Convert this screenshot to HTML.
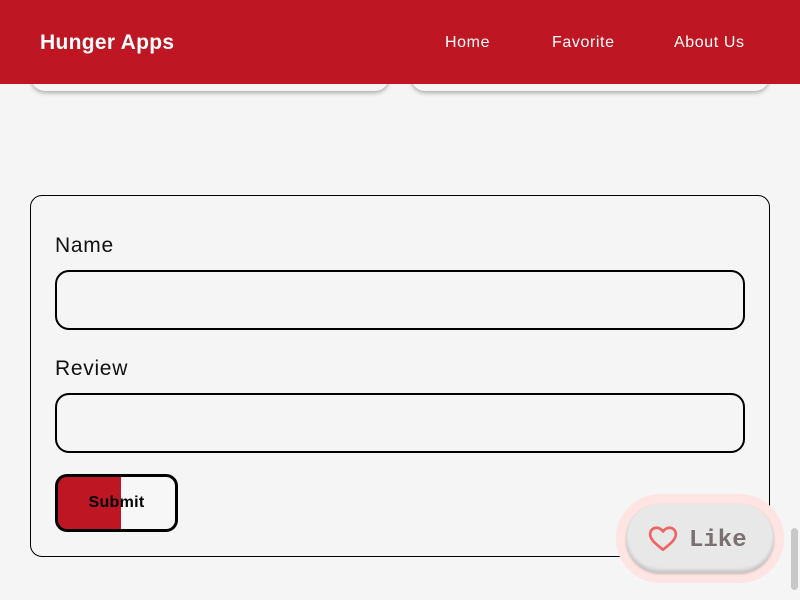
<!DOCTYPE html>
<html><head><meta charset="utf-8"><style>
*{box-sizing:border-box;margin:0;padding:0}
body{width:800px;height:600px;overflow:hidden;background:#f5f5f5;font-family:"Liberation Sans",sans-serif;position:relative}
header{position:absolute;top:0;left:0;width:800px;height:84px;background:#be1622;z-index:2}
.logo{position:absolute;left:40px;top:31px;color:#fff;font-weight:bold;font-size:21px;letter-spacing:0.3px}
nav a{position:absolute;top:34px;color:#fff;font-size:16px;letter-spacing:0.6px;text-decoration:none}
.card{position:absolute;top:60px;height:31px;background:#f5f5f5;border-radius:0 0 14px 14px;box-shadow:0 2px 4px rgba(0,0,0,.3);z-index:1}
form{position:absolute;left:30px;top:195px;width:740px;height:362px;border:1px solid #000;border-radius:12px}
label{position:absolute;left:24px;font-size:21px;letter-spacing:0.7px;color:#111}
.inp{position:absolute;left:24px;width:690px;height:60px;border:2px solid #000;border-radius:14px;background:#f5f5f5}
.btn{position:absolute;left:24px;top:278px;width:123px;height:58px;border:3px solid #000;border-radius:12px;overflow:hidden;background:linear-gradient(90deg,#be1622 0,#be1622 63px,#f7f7f7 63px)}
.btn span{position:absolute;left:0;right:0;top:17px;text-align:center;font-weight:bold;font-size:16px;letter-spacing:0.3px}
.likewrap{position:absolute;left:616px;top:494px;width:168px;height:89px;border-radius:44px;background:#ffe4e4}
.like{position:absolute;left:10px;top:10px;width:148px;height:69px;border-radius:34px;background:#e8e8e8;box-shadow:inset 0 -3px 3px rgba(0,0,0,.15),0 1px 2px rgba(0,0,0,.2)}
.like span{position:absolute;left:63px;top:23px;font-family:"Liberation Mono",monospace;font-weight:bold;font-size:24px;color:#7a7070}
.sb{position:absolute;left:791px;top:528px;width:7px;height:62px;background:#c8c8c8;border-radius:4px}
</style></head><body>
<header><div class="logo">Hunger Apps</div>
<nav><a style="left:445px">Home</a><a style="left:552px">Favorite</a><a style="left:674px">About Us</a></nav></header>
<div class="card" style="left:31px;width:358px"></div>
<div class="card" style="left:411px;width:358px"></div>
<form>
<label style="top:38px">Name</label>
<div class="inp" style="top:74px"></div>
<label style="top:161px">Review</label>
<div class="inp" style="top:197px"></div>
<div class="btn"><span>Submit</span></div>
</form>
<div class="likewrap"><div class="like">
<svg style="position:absolute;left:22px;top:21px" width="30" height="28" viewBox="0 0 28 26"><path d="M14 23C8 18 2 14 2 8.5 2 5 4.7 2.5 8 2.5c2.5 0 4.5 1.5 6 3.5 1.5-2 3.5-3.5 6-3.5 3.3 0 6 2.5 6 6C26 14 20 18 14 23z" fill="none" stroke="#f06464" stroke-width="2.5" stroke-linejoin="round"/></svg>
<span>Like</span></div></div>
<div class="sb"></div>
</body></html>
